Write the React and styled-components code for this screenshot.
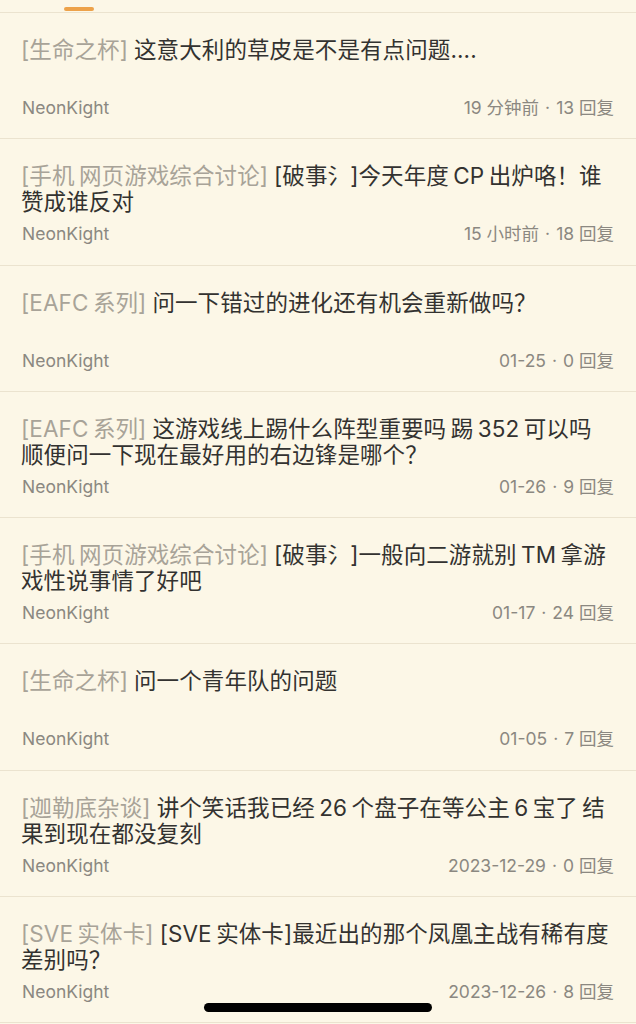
import React from 'react'
import styled, {createGlobalStyle} from 'styled-components'

const colors = {
    background: '#fcf7e7',
    border: '#ebe3cf',
    accent: '#eda24a',
    tag: '#a8a398',
    title: '#333230',
    meta: '#8b8881',
}

const GlobalStyle = createGlobalStyle`
  html, body {
    margin: 0;
    padding: 0;
    background: ${colors.background};
  }
  body {
    font-family: Inter, "Noto Sans CJK SC", sans-serif;
    -webkit-font-smoothing: antialiased;
  }
`

const Page = styled.div`
  width: 636px;
  height: 1024px;
  overflow: hidden;
  background: ${colors.background};
  position: relative;
`

const TabStrip = styled.div`
  height: 12px;
  border-bottom: 1px solid ${colors.border};
  display: flex;
  align-items: flex-end;
  padding-left: 64px;
`

const TabIndicator = styled.div`
  width: 30px;
  height: 4px;
  margin-bottom: 1px;
  border-radius: 2px;
  background: ${colors.accent};
`

const ThreadList = styled.ul`
  list-style: none;
  margin: 0;
  padding: 0;
`

const ThreadRow = styled.li`
  padding: 24px 22px 19.25px 21px;
  border-bottom: 1px solid ${colors.border};
  display: flex;
  flex-direction: column;
  gap: 8px;
`

const ThreadTitle = styled.div`
  min-height: 52px;
  font-size: 22.5px;
  line-height: 26px;
  letter-spacing: 0.1px;
  word-spacing: -2px;
  color: ${colors.title};
  word-break: break-all;
`

const ForumTag = styled.span`
  color: ${colors.tag};
  margin-right: 6px;
`

const MetaLine = styled.div`
  display: flex;
  justify-content: space-between;
  align-items: center;
  font-size: 17.5px;
  line-height: 22px;
  color: ${colors.meta};
`

const Author = styled.span`
  padding-left: 1px;
`

const Dot = styled.span`
  margin: 0 6px;
`

const HomeIndicator = styled.div`
  position: absolute;
  left: 204px;
  bottom: 12px;
  width: 228px;
  height: 9px;
  border-radius: 5px;
  background: #000;
`

const threads = [
    {id: 1, forum: '[生命之杯]', title: '这意大利的草皮是不是有点问题....', time: '19 分钟前', replies: 13},
    {id: 2, forum: '[手机 网页游戏综合讨论]', title: '[破事氵]今天年度 CP 出炉咯！谁赞成谁反对', time: '15 小时前', replies: 18},
    {id: 3, forum: '[EAFC 系列]', title: '问一下错过的进化还有机会重新做吗？', time: '01-25', replies: 0},
    {id: 4, forum: '[EAFC 系列]', title: '这游戏线上踢什么阵型重要吗 踢 352 可以吗 顺便问一下现在最好用的右边锋是哪个？', time: '01-26', replies: 9},
    {id: 5, forum: '[手机 网页游戏综合讨论]', title: '[破事氵]一般向二游就别 TM 拿游戏性说事情了好吧', time: '01-17', replies: 24},
    {id: 6, forum: '[生命之杯]', title: '问一个青年队的问题', time: '01-05', replies: 7},
    {id: 7, forum: '[迦勒底杂谈]', title: '讲个笑话我已经 26 个盘子在等公主 6 宝了 结果到现在都没复刻', time: '2023-12-29', replies: 0},
    {id: 8, forum: '[SVE 实体卡]', title: '[SVE 实体卡]最近出的那个凤凰主战有稀有度差别吗？', time: '2023-12-26', replies: 8},
]

const App = () => {
    return (
        <Page>
            <GlobalStyle/>
            <TabStrip>
                <TabIndicator/>
            </TabStrip>
            <ThreadList>
                {threads.map(({id, forum, title, time, replies}) => (
                    <ThreadRow key={id}>
                        <ThreadTitle>
                            <ForumTag>{forum}</ForumTag>
                            {title}
                        </ThreadTitle>
                        <MetaLine>
                            <Author>NeonKight</Author>
                            <span>
                                {time}<Dot>·</Dot>{replies} 回复
                            </span>
                        </MetaLine>
                    </ThreadRow>
                ))}
            </ThreadList>
            <HomeIndicator/>
        </Page>
    )
}

export default App
